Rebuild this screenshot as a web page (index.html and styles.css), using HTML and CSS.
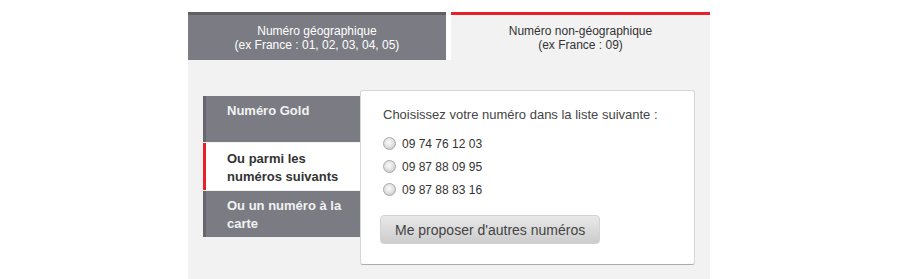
FILE: index.html
```html
<!DOCTYPE html>
<html lang="fr">
<head>
<meta charset="utf-8">
<title>Choix du numéro</title>
<link rel="stylesheet" href="styles.css">
</head>
<body>
<div class="wrap">
  <div class="tabs">
    <div class="tab tab-off">Numéro géographique<br>(ex France : 01, 02, 03, 04, 05)</div>
    <div class="tab tab-on">Numéro non-géographique<br>(ex France : 09)</div>
  </div>
  <div class="content">
    <ul class="side">
      <li class="item item-1">Numéro Gold</li>
      <li class="item item-2 active">Ou parmi les numéros suivants</li>
      <li class="item item-3">Ou un numéro à la carte</li>
    </ul>
    <div class="panel">
      <p class="intro">Choisissez votre numéro dans la liste suivante :</p>
      <ul class="choices">
        <li><label><input type="radio" name="num" class="radio"><span>09 74 76 12 03</span></label></li>
        <li><label><input type="radio" name="num" class="radio"><span>09 87 88 09 95</span></label></li>
        <li><label><input type="radio" name="num" class="radio"><span>09 87 88 83 16</span></label></li>
      </ul>
      <button type="button" class="btn">Me proposer d'autres numéros</button>
    </div>
  </div>
</div>
</body>
</html>
```

FILE: styles.css
```css
body {
  margin: 0;
  background: #fff;
  font-family: "Liberation Sans", Arial, sans-serif;
}

.wrap {
  width: 522px;
  margin: 12px 0 0 188px;
}

.tabs {
  display: flex;
  gap: 5px;
  height: 48px;
}

.tab {
  box-sizing: border-box;
  border-top: 3px solid;
  display: flex;
  align-items: center;
  justify-content: center;
  text-align: center;
  font-size: 12px;
  line-height: 14px;
}

.tab-off {
  width: 258px;
  background: #7b7c83;
  border-color: #5f6066;
  color: #fff;
}

.tab-on {
  flex: 1;
  background: #f2f2f2;
  border-color: #e8202a;
  color: #333;
}

.content {
  box-sizing: border-box;
  background: #f2f2f2;
  padding: 30px 15px 0 15px;
  height: 219px;
  display: flex;
  align-items: flex-start;
}

.side {
  list-style: none;
  margin: 6px 0 0;
  padding: 0;
  width: 158px;
  display: flex;
  flex-direction: column;
  gap: 1px;
  flex-shrink: 0;
}

.item {
  box-sizing: border-box;
  padding: 5px 8px 0 21px;
  border-left: 3px solid #66676d;
  background: #7b7c83;
  color: #f2f2f2;
  font-weight: bold;
  font-size: 13px;
  line-height: 18px;
}

.item-1 { height: 46px; padding-top: 6px; }
.item-2 { height: 47px; padding-top: 7px; }
.item-3 { height: 46px; padding-top: 6px; }

.item.active {
  background: #fff;
  color: #333;
  border-left-color: #e8202a;
}

.panel {
  position: relative;
  margin-left: -1px;
  width: 335px;
  box-sizing: border-box;
  background: #fff;
  border: 1px solid #d6d6d6;
  border-bottom-color: #ababab;
  border-radius: 3px;
  padding: 15px 20px 20px 22px;
  font-size: 13px;
  color: #444;
}

.intro {
  margin: 0 0 8px;
  line-height: 18px;
}

.choices {
  list-style: none;
  margin: 0;
  padding: 0;
}

.choices li {
  height: 23px;
  font-size: 12px;
  color: #333;
}

.choices label {
  display: flex;
  align-items: center;
  height: 23px;
}

.radio {
  appearance: none;
  -webkit-appearance: none;
  box-sizing: border-box;
  width: 13px;
  height: 13px;
  margin: 0 6px 0 0;
  border: 1px solid #a9a9a9;
  border-radius: 50%;
  background: radial-gradient(circle at 45% 40%, #fafafa 0, #e4e4e4 45%, #bdbdbd 100%);
}

.btn {
  display: block;
  margin: 14px 0 0 -3px;
  height: 29px;
  padding: 0 14px;
  border: 1px solid #d2d2d2;
  border-radius: 4px;
  background: linear-gradient(#e9e9e9, #cccccc);
  font-family: "Liberation Sans", Arial, sans-serif;
  font-size: 14px;
  color: #444;
}
```
